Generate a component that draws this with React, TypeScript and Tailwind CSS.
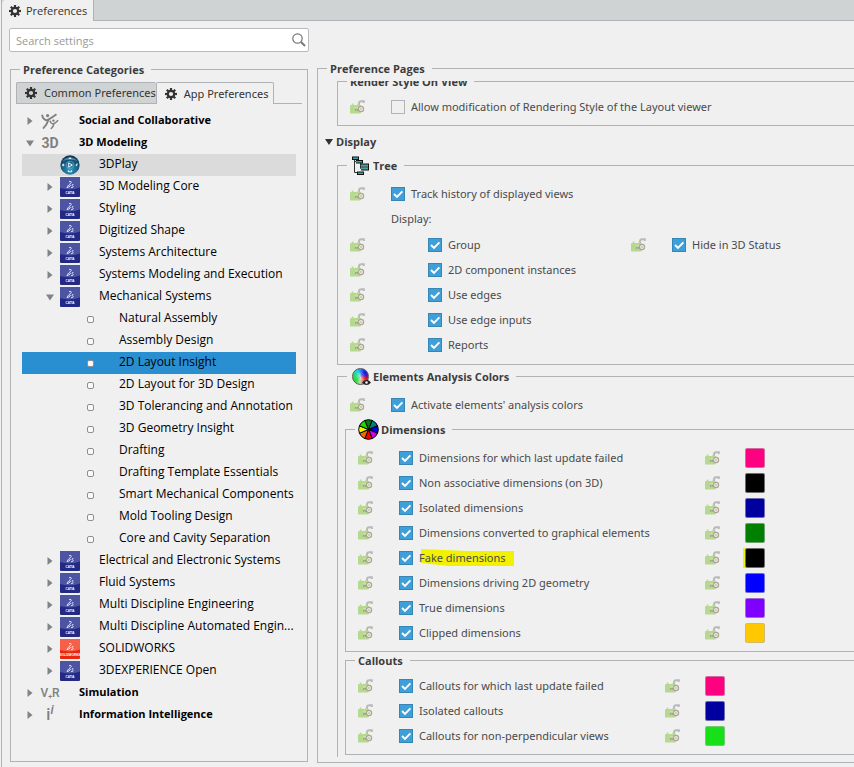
import React, { useState } from 'react';

type IconKind = 'social' | '3d' | 'play' | 'catia' | 'solidworks' | 'vr' | 'info' | 'dot';

interface TreeItem {
  label: string;
  level: 0 | 1 | 2;
  icon: IconKind;
  state?: 'open' | 'closed';
  hovered?: boolean;
}

interface ColorOption {
  label: string;
  color: string;
  marked?: boolean;
}

const treeItems: TreeItem[] = [
  { label: 'Social and Collaborative', level: 0, icon: 'social', state: 'closed' },
  { label: '3D Modeling', level: 0, icon: '3d', state: 'open' },
  { label: '3DPlay', level: 1, icon: 'play', hovered: true },
  { label: '3D Modeling Core', level: 1, icon: 'catia', state: 'closed' },
  { label: 'Styling', level: 1, icon: 'catia', state: 'closed' },
  { label: 'Digitized Shape', level: 1, icon: 'catia', state: 'closed' },
  { label: 'Systems Architecture', level: 1, icon: 'catia', state: 'closed' },
  { label: 'Systems Modeling and Execution', level: 1, icon: 'catia', state: 'closed' },
  { label: 'Mechanical Systems', level: 1, icon: 'catia', state: 'open' },
  { label: 'Natural Assembly', level: 2, icon: 'dot' },
  { label: 'Assembly Design', level: 2, icon: 'dot' },
  { label: '2D Layout Insight', level: 2, icon: 'dot' },
  { label: '2D Layout for 3D Design', level: 2, icon: 'dot' },
  { label: '3D Tolerancing and Annotation', level: 2, icon: 'dot' },
  { label: '3D Geometry Insight', level: 2, icon: 'dot' },
  { label: 'Drafting', level: 2, icon: 'dot' },
  { label: 'Drafting Template Essentials', level: 2, icon: 'dot' },
  { label: 'Smart Mechanical Components', level: 2, icon: 'dot' },
  { label: 'Mold Tooling Design', level: 2, icon: 'dot' },
  { label: 'Core and Cavity Separation', level: 2, icon: 'dot' },
  { label: 'Electrical and Electronic Systems', level: 1, icon: 'catia', state: 'closed' },
  { label: 'Fluid Systems', level: 1, icon: 'catia', state: 'closed' },
  { label: 'Multi Discipline Engineering', level: 1, icon: 'catia', state: 'closed' },
  { label: 'Multi Discipline Automated Engin...', level: 1, icon: 'catia', state: 'closed' },
  { label: 'SOLIDWORKS', level: 1, icon: 'solidworks', state: 'closed' },
  { label: '3DEXPERIENCE Open', level: 1, icon: 'catia', state: 'closed' },
  { label: 'Simulation', level: 0, icon: 'vr', state: 'closed' },
  { label: 'Information Intelligence', level: 0, icon: 'info', state: 'closed' },
];

const dimensions: ColorOption[] = [
  { label: 'Dimensions for which last update failed', color: '#ff0080' },
  { label: 'Non associative dimensions (on 3D)', color: '#000000' },
  { label: 'Isolated dimensions', color: '#0000a0' },
  { label: 'Dimensions converted to graphical elements', color: '#008000' },
  { label: 'Fake dimensions', color: '#000000', marked: true },
  { label: 'Dimensions driving 2D geometry', color: '#0000ff' },
  { label: 'True dimensions', color: '#8000ff' },
  { label: 'Clipped dimensions', color: '#ffc800' },
];

const callouts: ColorOption[] = [
  { label: 'Callouts for which last update failed', color: '#ff0080' },
  { label: 'Isolated callouts', color: '#0000a0' },
  { label: 'Callouts for non-perpendicular views', color: '#18e018' },
];

const GearIcon = () => (
  <svg width="12" height="12" viewBox="-6 -6 12 12" className="shrink-0">
    <circle r="3.2" fill="none" stroke="#333" strokeWidth="2.2" />
    {[0, 45, 90, 135, 180, 225, 270, 315].map(a => (
      <rect key={a} x="-1.1" y="-6" width="2.2" height="2.6" fill="#333" transform={`rotate(${a})`} />
    ))}
  </svg>
);

const LockIcon = () => (
  <svg width="15" height="14" viewBox="0 0 15 14" className="shrink-0">
    <path d="M9 6V3.6Q9 1.2 11.200 1.200H13.800V3" fill="none" stroke="#b9b9b9" strokeWidth="2" />
    <path d="M1.800 3.400h1.600v1.600h4v-1.200h1.600v1.200h2V12q0 1.600-1.600 1.600H1.400Q0 13.600 0 12.400V6.200q0-1.200 1.200-1.200h.6z" fill="#b4d98f" />
    <circle cx="11" cy="9" r="2.600" fill="#f0eddf" stroke="#aaa595" strokeWidth="1.200" />
    <circle cx="11" cy="9" r="0.800" fill="#aaa595" />
    <path d="M5 9h3.400M5.600 9.500v1.500M7.400 9.500v1.300" stroke="#a3a08e" strokeWidth="1.200" fill="none" />
    <path d="M5 8h3.200" stroke="#e8e6d2" strokeWidth="0.900" />
  </svg>
);

const BrandIcon = ({ red }: { red?: boolean }) => (
  <svg width="20" height="20" viewBox="0 0 20 20">
    <rect width="20" height="20" rx="1" fill={red ? '#e8270d' : '#232a86'} />
    <path d="M1 0h18q1 0 1 1v9.500Q10 14 0 11V1q0-1 1-1z" fill={red ? '#f4604a' : '#4d55a3'} />
    <path
      d="M9 4.600q2.600-.6 2.300.8-.3 1-2 1.900M9.400 7.400q1.500.4.6 1.700-.8 1-3 1.500l1.700-2.800M13.400 7.600q-1.800-.2-1.200.9 1.400 1.100.6 1.800-.8.5-1.800.2"
      fill="none"
      stroke="#fff"
      strokeWidth="0.800"
    />
    <text
      x="10"
      y="16.800"
      textAnchor="middle"
      fill="#fff"
      className={red ? 'font-["Liberation_Sans"] text-[3px] font-bold' : 'font-["Liberation_Sans"] text-[3px] font-bold'}
    >
      {red ? 'SOLIDWORKS' : 'CATIA'}
    </text>
  </svg>
);

const PlayIcon = () => (
  <svg width="20" height="20" viewBox="0 0 20 20">
    <defs>
      <radialGradient id="playball" cx="50%" cy="75%" r="75%">
        <stop offset="0" stopColor="#2f9cc4" />
        <stop offset="0.6" stopColor="#17597d" />
        <stop offset="1" stopColor="#0b3450" />
      </radialGradient>
    </defs>
    <circle cx="10" cy="10" r="9.700" fill="url(#playball)" />
    <path d="M2.500 6Q10-1.500 17.500 6 10 3.500 2.500 6z" fill="#8fb9cc" opacity="0.5" />
    <circle cx="10" cy="10" r="3.800" fill="none" stroke="#5fb4d6" strokeWidth="0.600" />
    <path d="M8.700 7.800l3.600 2.200-3.600 2.200z" fill="none" stroke="#fff" strokeWidth="0.900" />
    <path d="M2 10h2.400M3.200 8.800v2.400M8.800 3.400h2.400M8.400 16.800h3.200M8.400 15.200v1.600M11.600 15.200v1.600M16 11l1.400-2.400" stroke="#e5f4fa" strokeWidth="1.100" />
  </svg>
);

const SocialIcon = () => (
  <svg width="20" height="20" viewBox="0 0 20 20" fill="none" stroke="#808080">
    <path d="M2 3.800Q3.200 9 7 9.400Q10.500 7.500 16.500 3.200M8.600 8.600Q7 14 3 17.600" strokeWidth="1.900" />
    <path d="M10 9.600Q10.800 12.800 13.200 13Q15.500 12 18.200 9.200M14 12.600Q13.600 15.600 10.800 18" strokeWidth="1.500" />
    <circle cx="7.600" cy="4.600" r="1.600" fill="#808080" stroke="none" />
    <circle cx="13.400" cy="9.600" r="1.200" fill="#808080" stroke="none" />
  </svg>
);

const TreeIcon = ({ kind }: { kind: IconKind }) => {
  switch (kind) {
    case 'social':
      return <SocialIcon />;
    case '3d':
      return <span className="font-[Roboto,sans-serif] text-[14px] leading-5 font-bold text-[#808080]">3D</span>;
    case 'play':
      return <PlayIcon />;
    case 'catia':
      return <BrandIcon />;
    case 'solidworks':
      return <BrandIcon red />;
    case 'vr':
      return (
        <span className="font-[Roboto,sans-serif] text-[12px] leading-5 font-medium text-[#808080]">
          V<sub className="text-[7px]">+</sub>R
        </span>
      );
    case 'info':
      return (
        <span className="font-[Roboto,sans-serif] text-[16px] leading-5 font-medium text-[#808080]">
          i<sup className="text-[13px] italic">i</sup>
        </span>
      );
    default:
      return null;
  }
};

const TreeRow = ({ item, selected, onSelect }: { item: TreeItem; selected: boolean; onSelect: () => void }) => {
  const indent = ['pl-1', 'pl-6', 'pl-16'][item.level];
  const bg = selected ? 'bg-[#2a8fd0]' : item.hovered ? 'bg-[#dbdbdb]' : '';

  return (
    <li className={`flex h-[22px] items-center ${indent} ${bg}`}>
      {item.icon === 'dot' ? (
        <span className="mr-[25px] flex w-2 justify-center">
          <span className="h-[7px] w-[7px] rounded-xs border border-[#8e8e8e] bg-[#fafafa]" />
        </span>
      ) : (
        <>
          <span className="mr-1.5 flex w-2 justify-center">
            {item.state && (
              <button aria-label={`Toggle ${item.label}`} className="block">
                <svg width="8" height="8" viewBox="0 0 8 8" fill="#808488">
                  {item.state === 'open' ? <path d="M0 1.500h8L4 7.500z" /> : <path d="M1.500 0v8l5-4z" />}
                </svg>
              </button>
            )}
          </span>
          <span className="mr-[19px] flex h-5 w-5 items-center justify-center whitespace-nowrap">
            <TreeIcon kind={item.icon} />
          </span>
        </>
      )}
      <button
        onClick={onSelect}
        className={`pb-[3px] leading-[17px] whitespace-nowrap text-black ${item.level === 0 ? 'text-[11px] font-bold' : 'text-xs'}`}
      >
        {item.label}
      </button>
    </li>
  );
};

const CheckOption = ({ label, off, marked }: { label: string; off?: boolean; marked?: boolean }) => {
  const [checked, setChecked] = useState(!off);

  return (
    <label className='relative flex items-center gap-1.5 font-["Noto_Sans",sans-serif] whitespace-nowrap'>
      {marked && (
        <svg width="93" height="18" viewBox="0 0 93 18" className="absolute left-[22px]">
          <path d="M0 0L45 2H93V17L28 17 0 14z" fill="#f2f200" />
        </svg>
      )}
      <span className="grid">
        <input
          type="checkbox"
          checked={checked}
          onChange={e => setChecked(e.target.checked)}
          className="col-start-1 row-start-1 h-3.5 w-3.5 appearance-none border border-[#b4b4b4] checked:border-[#3585b5] checked:bg-[#3f9fd8]"
        />
        {checked && (
          <svg width="14" height="14" viewBox="0 0 14 14" className="pointer-events-none col-start-1 row-start-1">
            <path d="M3 7l3 3 5.400-5.600" fill="none" stroke="#fff" strokeWidth="1.900" />
          </svg>
        )}
      </span>
      <span className="relative">{label}</span>
    </label>
  );
};

const Swatch = ({ option }: { option: ColorOption }) => (
  <span className={`flex w-fit ${option.marked ? '-ml-0.5 border-l-2 border-[#f2f200]' : ''}`}>
    <button
      aria-label={`Color of ${option.label}`}
      className="h-5 w-5 rounded-xs border border-[#b4b4b4]/60"
      style={{ backgroundColor: option.color }}
    />
  </span>
);

const Group = ({ title, icon, className, short, children }: {
  title: string;
  icon?: React.ReactNode;
  className?: string;
  short?: boolean;
  children: React.ReactNode;
}) => (
  <fieldset className={`min-w-0 border border-[#b0b3b5] ${className ?? ''}`}>
    <legend className={`ml-[9px] flex items-center gap-0.5 pr-[7px] pl-[3px] font-bold text-[#3c3c3c] ${short ? 'h-[17px]' : 'h-[21px]'}`}>
      {icon}
      {title}
    </legend>
    {children}
  </fieldset>
);

const TreeGroupIcon = () => (
  <svg width="19" height="19" viewBox="0 0 19 19" className="ml-0.5">
    <path d="M2.500 2.500v14H6M3 5.500h3M8.500 6v6.500H11M8.500 9H11" fill="none" stroke="#333" />
    <g fill="#3fa7a7">
      <path d="M0 1h7v2.500H0zM4 4.500h7V7H4zM9 8h8v2.500H9zM9 11.500h8V14H9zM5 16h7v2.500H5z" />
      <path d="M0 1h7M0 3.500h7M4 4.500h7M4 7h7M9 8h8M9 11h8M9 14h8M5 16h7M5 18.500h7" stroke="#111" />
      <path d="M.5 1v2M6.500 1v2M10.500 4.500V7M16.500 8v6M5.500 16v2.500M11.500 16v2.500" stroke="#111" />
    </g>
  </svg>
);

const WheelIcon = () => {
  const colors = ['#007a1a', '#00807a', '#0000e0', '#d000f0', '#f00000', '#f06a00', '#f0f000', '#20d800'];
  const point = (i: number) => {
    const a = ((i * 45 - 112.5) * Math.PI) / 180;
    return `${10.5 + 9.8 * Math.cos(a)} ${10.5 + 9.8 * Math.sin(a)}`;
  };
  return (
    <svg width="21" height="21" viewBox="0 0 21 21">
      {colors.map((c, i) => (
        <path key={c} d={`M10.500 10.500L${point(i)}A9.800 9.800 0 0 1 ${point(i + 1)}z`} fill={c} stroke="#000" strokeWidth="1" />
      ))}
    </svg>
  );
};

const AnalysisIcon = () => (
  <span className="relative ml-0.5 h-[18px] w-[19px]">
    <span className="block h-[17px] w-[17px] rounded-full border border-[#555] bg-[radial-gradient(circle,#ffffff90,transparent_50%),conic-gradient(#3080ff,#1020e0_12%,#5010c0_22%,#e01020_30%,#ff7070_42%,#b0e0b0_52%,#30d840_62%,#20e060_78%,#20d8f0_92%,#3080ff)]" />
    <svg width="9" height="7" viewBox="0 0 9 7" className="absolute right-0 bottom-0">
      <path d="M0 3.500Q4.500-2 9 3.500 4.500 8.500 0 3.500z" fill="#222" />
      <circle cx="4.500" cy="3.500" r="1.300" fill="#eee" />
    </svg>
  </span>
);

const App: React.FC = () => {
  const [search, setSearch] = useState('');
  const [selected, setSelected] = useState('2D Layout Insight');

  return (
    <div className='flex min-h-screen flex-col bg-[#f0f0f0] font-["Open_Sans","Noto_Sans",sans-serif] text-[11px] leading-4 text-[#4a4a4a]'>
      <div className="ml-px flex h-[21px] border-l border-[#b0b3b5] bg-[#d0d3d4]">
        <button className="flex items-center gap-[5px] rounded-tl-sm border-r border-[#b0b3b5] bg-[#f0f0f0] pr-1.5 pl-[7px] text-[#333]">
          <GearIcon />
          Preferences
        </button>
        <div className="flex-1 border-b border-[#b0b3b5]" />
      </div>

      <div className="ml-px flex flex-1 gap-2 border-l border-[#b0b3b5] pb-1 pl-[7px]">
        <div className="flex w-[300px] shrink-0 flex-col gap-[7px] pt-[7px]">
          <div className="flex h-6 items-center rounded-xs border border-[#b9bcbe] bg-white px-[6px]">
            <input
              type="text"
              aria-label="Search settings"
              placeholder="Search settings"
              value={search}
              onChange={e => setSearch(e.target.value)}
              className="min-w-0 flex-1 pt-0.5 outline-none placeholder:text-[#9a9a9a]"
            />
            <button aria-label="Search" className="-mr-1">
              <svg width="14" height="14" viewBox="0 0 14 14" fill="none" stroke="#777">
                <circle cx="5.500" cy="5.500" r="4.700" strokeWidth="1.200" />
                <path d="M9 9l4 4" strokeWidth="2" />
              </svg>
            </button>
          </div>

          <Group title="Preference Categories" className="mx-px mb-px flex-1">
            <div className="px-[5px] pt-0.5">
              <div className='flex h-[22px] font-["Noto_Sans",sans-serif]'>
                <button className="flex items-center gap-[7px] rounded-t-xs border border-r-0 border-[#b0b3b5] bg-[#d0d3d4] pl-2 text-[#333]">
                  <GearIcon />
                  Common Preferences
                </button>
                <button className="flex items-center gap-[7px] rounded-t-xs border border-b-0 border-[#b0b3b5] pr-[5px] pl-2 text-[#333]">
                  <GearIcon />
                  App Preferences
                </button>
                <div className="flex-1 border-b border-[#b0b3b5]" />
              </div>
              <ul className="mx-1.5 mt-1.5">
                {treeItems.map(item => (
                  <TreeRow
                    key={item.label}
                    item={item}
                    selected={item.label === selected}
                    onSelect={() => setSelected(item.label)}
                  />
                ))}
              </ul>
            </div>
          </Group>
        </div>

        <div className="flex min-w-0 flex-1 flex-col pt-[37px]">
          <Group title="Preference Pages" className="flex-1 border-r-0">
            {/* Scrolled page content */}
            <div className="mt-0.5 overflow-hidden pb-[5px]">
              <Group title="Render Style On View" className="-mt-2.5 ml-[19px] border-r-0">
                <div className="grid h-[33px] grid-cols-[41px_1fr] items-center pb-1 pl-3">
                  <LockIcon />
                  <CheckOption label="Allow modification of Rendering Style of the Layout viewer" off />
                </div>
              </Group>

              <button className="flex h-[29px] items-center gap-[3px] pt-0.5 pl-[7px] font-bold text-[#3c3c3c]">
                <svg width="8" height="6" viewBox="0 0 8 6" fill="#333">
                  <path d="M0 0h8L4 6z" />
                </svg>
                Display
              </button>

              <Group title="Tree" icon={<TreeGroupIcon />} className="ml-[19px] border-r-0">
                <div className="pt-[5px] pb-[7px] pl-3">
                  <div className="grid h-[25px] grid-cols-[41px_1fr] items-center">
                    <LockIcon />
                    <CheckOption label="Track history of displayed views" />
                  </div>
                  <p className='h-[26px] pl-[41px] font-["Noto_Sans",sans-serif] leading-[25px]'>Display:</p>
                  {['Group', '2D component instances', 'Use edges', 'Use edge inputs', 'Reports'].map((label, i) => (
                    <div key={label} className="grid h-[25px] grid-cols-[78px_203px_41px_auto] items-center justify-start">
                      <LockIcon />
                      <CheckOption label={label} />
                      {i === 0 && (
                        <>
                          <LockIcon />
                          <CheckOption label="Hide in 3D Status" />
                        </>
                      )}
                    </div>
                  ))}
                </div>
              </Group>

              <Group title="Elements Analysis Colors" icon={<AnalysisIcon />} className="mt-px ml-[19px] border-r-0 border-b-0">
                <div className="pt-[5px] pb-0.5">
                  <div className="grid h-[25px] grid-cols-[41px_1fr] items-center pl-3">
                    <LockIcon />
                    <CheckOption label="Activate elements' analysis colors" />
                  </div>

                  <Group title="Dimensions" icon={<WheelIcon />} className="mt-0.5 ml-[7px] border-r-0">
                    <div className="pt-[5px] pb-1.5 pl-3">
                      {dimensions.map(d => (
                        <div key={d.label} className="grid h-[25px] grid-cols-[41px_306px_40px_auto] items-center justify-start">
                          <LockIcon />
                          <CheckOption label={d.label} marked={d.marked} />
                          <LockIcon />
                          <Swatch option={d} />
                        </div>
                      ))}
                    </div>
                  </Group>

                  <Group title="Callouts" short className="ml-[7px] border-r-0">
                    <div className="pt-1 pb-1.5 pl-3">
                      {callouts.map(c => (
                        <div key={c.label} className="grid h-[25px] grid-cols-[41px_266px_40px_auto] items-center justify-start">
                          <LockIcon />
                          <CheckOption label={c.label} />
                          <LockIcon />
                          <Swatch option={c} />
                        </div>
                      ))}
                    </div>
                  </Group>
                </div>
              </Group>
            </div>
          </Group>
        </div>
      </div>
    </div>
  );
};

export default App;
